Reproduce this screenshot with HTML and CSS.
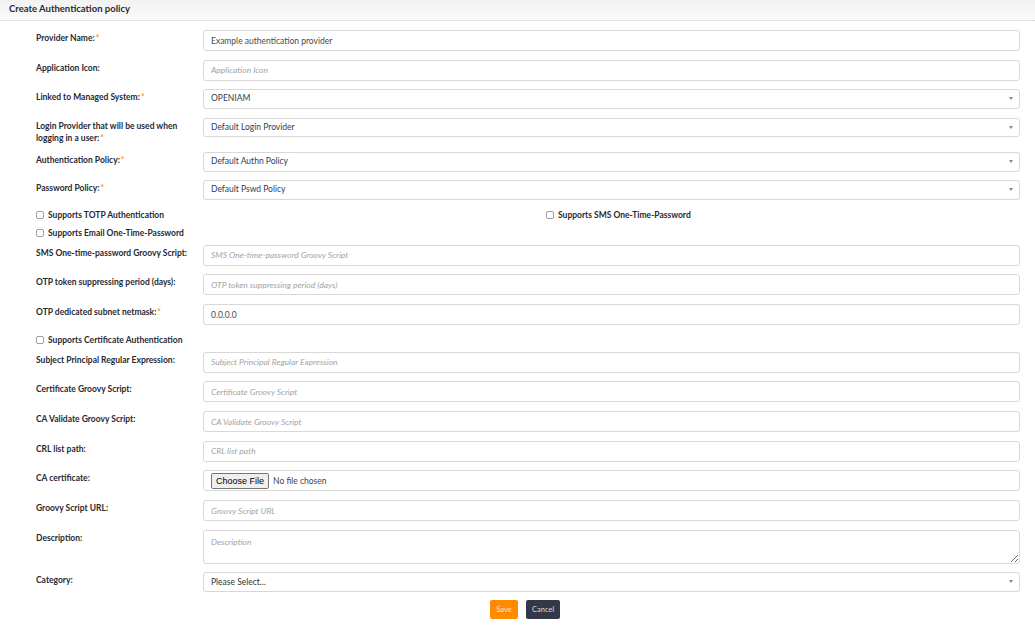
FILE: index.html
```html
<!DOCTYPE html>
<html>
<head>
<meta charset="utf-8">
<link rel="stylesheet" href="styles.css">
</head>
<body>
<div class="header">Create Authentication policy</div>
<form class="form">
  <div class="row">
    <label class="lbl">Provider Name:<span class="req">*</span></label>
    <input class="inp" type="text" value="Example authentication provider">
  </div>
  <div class="row">
    <label class="lbl">Application Icon:</label>
    <input class="inp" type="text" placeholder="Application Icon">
  </div>
  <div class="row">
    <label class="lbl">Linked to Managed System:<span class="req">*</span></label>
    <div class="sel">OPENIAM<span class="caret"></span></div>
  </div>
  <div class="row">
    <label class="lbl"><span class="ln">Login Provider that will be used when</span> <span class="ln">logging in a user:</span><span class="req">*</span></label>
    <div class="sel">Default Login Provider<span class="caret"></span></div>
  </div>
  <div class="row">
    <label class="lbl">Authentication Policy:<span class="req">*</span></label>
    <div class="sel">Default Authn Policy<span class="caret"></span></div>
  </div>
  <div class="row">
    <label class="lbl">Password Policy:<span class="req">*</span></label>
    <div class="sel">Default Pswd Policy<span class="caret"></span></div>
  </div>
  <div class="checks">
    <label class="chk"><input type="checkbox"><span>Supports TOTP Authentication</span></label>
    <label class="chk"><input type="checkbox"><span>Supports SMS One-Time-Password</span></label>
  </div>
  <div class="checks">
    <label class="chk"><input type="checkbox"><span>Supports Email One-Time-Password</span></label>
  </div>
  <div class="row">
    <label class="lbl">SMS One-time-password Groovy Script:</label>
    <input class="inp" type="text" placeholder="SMS One-time-password Groovy Script">
  </div>
  <div class="row">
    <label class="lbl">OTP token suppressing period (days):</label>
    <input class="inp" type="text" placeholder="OTP token suppressing period (days)">
  </div>
  <div class="row">
    <label class="lbl">OTP dedicated subnet netmask:<span class="req">*</span></label>
    <input class="inp" type="text" value="0.0.0.0">
  </div>
  <div class="checks">
    <label class="chk"><input type="checkbox"><span>Supports Certificate Authentication</span></label>
  </div>
  <div class="row">
    <label class="lbl">Subject Principal Regular Expression:</label>
    <input class="inp" type="text" placeholder="Subject Principal Regular Expression">
  </div>
  <div class="row">
    <label class="lbl">Certificate Groovy Script:</label>
    <input class="inp" type="text" placeholder="Certificate Groovy Script">
  </div>
  <div class="row">
    <label class="lbl">CA Validate Groovy Script:</label>
    <input class="inp" type="text" placeholder="CA Validate Groovy Script">
  </div>
  <div class="row">
    <label class="lbl">CRL list path:</label>
    <input class="inp" type="text" placeholder="CRL list path">
  </div>
  <div class="row">
    <label class="lbl">CA certificate:</label>
    <div class="filebox"><input class="file" type="file"></div>
  </div>
  <div class="row">
    <label class="lbl">Groovy Script URL:</label>
    <input class="inp" type="text" placeholder="Groovy Script URL">
  </div>
  <div class="row row-tight">
    <label class="lbl">Description:</label>
    <textarea class="inp ta" placeholder="Description"></textarea>
  </div>
  <div class="row row-tight">
    <label class="lbl">Category:</label>
    <div class="sel sel-cat">Please Select...<span class="caret"></span></div>
  </div>
  <div class="actions">
    <button type="button" class="btn btn-save">Save</button>
    <button type="button" class="btn btn-cancel">Cancel</button>
  </div>
</form>
</body>
</html>
```
FILE: styles.css
```css
* { box-sizing: border-box; }
html, body { margin: 0; padding: 0; background: #fff; }
body {
  font-family: "Lato", "Open Sans", sans-serif;
  font-size: 8.5px;
  color: #333;
  width: 1035px;
  height: 625px;
  overflow: hidden;
}
.header {
  height: 21px;
  padding: 3px 9px 0;
  font-weight: 700;
  font-size: 9.5px;
  color: #262a35;
  background: linear-gradient(#f2f2f2, #fafafa);
  border-bottom: 1px dotted #d6d6d6;
}
.form {
  padding: 9px 15px 0 36px;
}
.row {
  display: grid;
  grid-template-columns: 155px 1fr;
  column-gap: 12px;
  margin-bottom: 8.7px;
  align-items: start;
}
.row-tight { margin-bottom: 8px; }
.lbl {
  font-weight: 700;
  color: #272a33;
  padding-top: 2px;
  line-height: 12px;
}
.ln { white-space: nowrap; }
.req { color: #f7941d; margin-left: 1px; }
.inp {
  display: block;
  width: 100%;
  height: 21px;
  margin: 0;
  border: 1px solid #d8d8d8;
  border-radius: 3px;
  padding: 0 7px;
  font-family: inherit;
  font-size: 8.5px;
  color: #4a4a4a;
  background: #fff;
  outline: none;
}
.inp::placeholder { color: #a3a3a3; font-style: italic; }
.ta { height: 34px; padding-top: 6px; resize: vertical; }
.sel {
  position: relative;
  height: 19.5px;
  border: 1px solid #d8d8d8;
  border-radius: 3px;
  padding: 0 7px;
  line-height: 17.5px;
  color: #2f3b5a;
}
.sel-cat { height: 20px; line-height: 18px; color: #333; }
.caret {
  position: absolute;
  right: 6px;
  top: 7px;
  width: 0;
  height: 0;
  border-left: 2.5px solid transparent;
  border-right: 2.5px solid transparent;
  border-top: 3px solid #888;
}
.checks {
  display: grid;
  grid-template-columns: 510px 1fr;
  height: 13px;
  margin-bottom: 5px;
  align-items: center;
}
.chk {
  display: flex;
  align-items: center;
  gap: 4px;
  font-weight: 700;
  color: #272a33;
}
.chk input {
  appearance: none;
  -webkit-appearance: none;
  width: 8px;
  height: 8px;
  margin: 0;
  border: 1px solid #a0a0a0;
  border-radius: 2px;
  background: #fff;
}
.filebox {
  height: 21px;
  border: 1px solid #d8d8d8;
  border-radius: 3px;
  padding: 2px 7px 0;
}
.file {
  font-family: inherit;
  font-size: 8.5px;
  color: #444;
}
.file::file-selector-button {
  font-family: "Liberation Sans", Arial, sans-serif;
  font-size: 9px;
  height: 16px;
  padding: 0 4px;
  margin-right: 4px;
  border: 1px solid #767676;
  border-radius: 2px;
  background: #efefef;
  color: #000;
}
.actions {
  display: flex;
  justify-content: center;
  gap: 8px;
  padding-right: 6px;
}
.btn {
  height: 19px;
  border: none;
  border-radius: 2px;
  font-family: inherit;
  font-size: 7.5px;
  padding: 0 6px;
}
.btn-save { background: #ff8a00; color: #fde7cf; width: 28px; }
.btn-cancel { background: #343747; color: #d8d9de; width: 34px; }
```
